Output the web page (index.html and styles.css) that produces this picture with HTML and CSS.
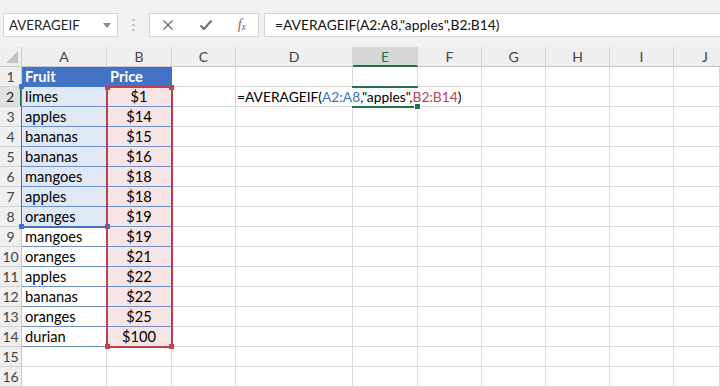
FILE: index.html
```html
<!DOCTYPE html>
<html>
<head>
<meta charset="utf-8">
<link rel="stylesheet" href="styles.css">
</head>
<body>
<div class="app">
  <div class="fbar">
    <div class="namebox">
      <span class="nb-text">AVERAGEIF</span>
      <svg class="nb-arrow" width="8" height="5" viewBox="0 0 8 5"><path d="M0 0H8L4 5Z" fill="#8a8a8a"/></svg>
    </div>
    <div class="grip">
      <svg width="3" height="12" viewBox="0 0 3 12"><rect x="0.5" y="0" width="2" height="2" fill="#b4b4b4"/><rect x="0.5" y="5" width="2" height="2" fill="#b4b4b4"/><rect x="0.5" y="10" width="2" height="2" fill="#b4b4b4"/></svg>
    </div>
    <div class="fbtns">
      <svg class="ic" width="12" height="12" viewBox="0 0 12 12"><path d="M1.5 1.5L10.5 10.5M10.5 1.5L1.5 10.5" stroke="#6e6e6e" stroke-width="1.4" fill="none"/></svg>
      <svg class="ic" width="14" height="12" viewBox="0 0 14 12"><path d="M1.5 6.5L5 10L12.5 1.5" stroke="#6e6e6e" stroke-width="2" fill="none"/></svg>
      <span class="fx">f<sub>x</sub></span>
    </div>
    <div class="finput">=AVERAGEIF(A2:A8,"apples",B2:B14)</div>
  </div>
  <div class="sheet">
    <div class="grid">
      <div class="corner"><span class="tri"></span></div>
      <div class="ch">A</div><div class="ch">B</div><div class="ch">C</div><div class="ch">D</div><div class="ch sel">E</div><div class="ch">F</div><div class="ch">G</div><div class="ch">H</div><div class="ch">I</div><div class="ch last">J</div>

      <div class="rh">1</div><div class="c thead">Fruit</div><div class="c thead">Price</div><div class="c"></div><div class="c"></div><div class="c"></div><div class="c"></div><div class="c"></div><div class="c"></div><div class="c"></div><div class="c"></div>

      <div class="rh rsel">2</div><div class="c ta ra">limes</div><div class="c tb">$1</div><div class="c"></div><div class="c nor ed"><span class="edit">=AVERAGEIF(<span class="ref-a">A2:A8</span>,"apples",<span class="ref-b">B2:B14</span>)</span></div><div class="c nor"></div><div class="c"></div><div class="c"></div><div class="c"></div><div class="c"></div><div class="c"></div>

      <div class="rh">3</div><div class="c ta ra">apples</div><div class="c tb">$14</div><div class="c"></div><div class="c"></div><div class="c"></div><div class="c"></div><div class="c"></div><div class="c"></div><div class="c"></div><div class="c"></div>
      <div class="rh">4</div><div class="c ta ra">bananas</div><div class="c tb">$15</div><div class="c"></div><div class="c"></div><div class="c"></div><div class="c"></div><div class="c"></div><div class="c"></div><div class="c"></div><div class="c"></div>
      <div class="rh">5</div><div class="c ta ra">bananas</div><div class="c tb">$16</div><div class="c"></div><div class="c"></div><div class="c"></div><div class="c"></div><div class="c"></div><div class="c"></div><div class="c"></div><div class="c"></div>
      <div class="rh">6</div><div class="c ta ra">mangoes</div><div class="c tb">$18</div><div class="c"></div><div class="c"></div><div class="c"></div><div class="c"></div><div class="c"></div><div class="c"></div><div class="c"></div><div class="c"></div>
      <div class="rh">7</div><div class="c ta ra">apples</div><div class="c tb">$18</div><div class="c"></div><div class="c"></div><div class="c"></div><div class="c"></div><div class="c"></div><div class="c"></div><div class="c"></div><div class="c"></div>
      <div class="rh">8</div><div class="c ta ra">oranges</div><div class="c tb">$19</div><div class="c"></div><div class="c"></div><div class="c"></div><div class="c"></div><div class="c"></div><div class="c"></div><div class="c"></div><div class="c"></div>
      <div class="rh">9</div><div class="c ta">mangoes</div><div class="c tb">$19</div><div class="c"></div><div class="c"></div><div class="c"></div><div class="c"></div><div class="c"></div><div class="c"></div><div class="c"></div><div class="c"></div>
      <div class="rh">10</div><div class="c ta">oranges</div><div class="c tb">$21</div><div class="c"></div><div class="c"></div><div class="c"></div><div class="c"></div><div class="c"></div><div class="c"></div><div class="c"></div><div class="c"></div>
      <div class="rh">11</div><div class="c ta">apples</div><div class="c tb">$22</div><div class="c"></div><div class="c"></div><div class="c"></div><div class="c"></div><div class="c"></div><div class="c"></div><div class="c"></div><div class="c"></div>
      <div class="rh">12</div><div class="c ta">bananas</div><div class="c tb">$22</div><div class="c"></div><div class="c"></div><div class="c"></div><div class="c"></div><div class="c"></div><div class="c"></div><div class="c"></div><div class="c"></div>
      <div class="rh">13</div><div class="c ta">oranges</div><div class="c tb">$25</div><div class="c"></div><div class="c"></div><div class="c"></div><div class="c"></div><div class="c"></div><div class="c"></div><div class="c"></div><div class="c"></div>
      <div class="rh">14</div><div class="c ta">durian</div><div class="c tb">$100</div><div class="c"></div><div class="c"></div><div class="c"></div><div class="c"></div><div class="c"></div><div class="c"></div><div class="c"></div><div class="c"></div>
      <div class="rh">15</div><div class="c"></div><div class="c"></div><div class="c"></div><div class="c"></div><div class="c"></div><div class="c"></div><div class="c"></div><div class="c"></div><div class="c"></div><div class="c"></div>
      <div class="rh">16</div><div class="c"></div><div class="c"></div><div class="c"></div><div class="c"></div><div class="c"></div><div class="c"></div><div class="c"></div><div class="c"></div><div class="c"></div><div class="c"></div>
    </div>

    <div class="range range-a"><i class="h tl"></i><i class="h bl"></i><i class="h br"></i></div>
    <div class="range range-b"><i class="h tl"></i><i class="h tr"></i><i class="h bl"></i><i class="h br"></i></div>
    <div class="active"><i class="fill"></i></div>
  </div>
</div>
</body>
</html>
```

FILE: styles.css
```css
* { box-sizing: border-box; }
html, body { margin: 0; padding: 0; background: #fff; }
body { font-family: Lato, "Open Sans", sans-serif; color: #000; }
.app { width: 720px; height: 387px; overflow: hidden; }

.fbar {
  height: 47px;
  background: #f1f1f1;
  display: flex;
  align-items: flex-start;
  padding-top: 13px;
  padding-left: 3px;
}
.namebox {
  width: 115px; height: 24px;
  background: #fff;
  border: 1px solid #d4d4d4;
  display: flex; align-items: center; justify-content: space-between;
  padding: 0 6px 0 5px;
  font-size: 13.3px; color: #222;
}
.nb-arrow { margin-top: 1px; }
.grip { width: 31px; height: 24px; display: flex; align-items: center; justify-content: center; }
.fbtns {
  width: 110px; height: 24px;
  background: #fff; border: 1px solid #d4d4d4;
  display: flex; align-items: center; justify-content: space-between;
  padding: 0 12px 0 12px;
}
.fx { font-family: "Liberation Serif", serif; font-style: italic; color: #6e6e6e; font-size: 14px; line-height: 1; }
.fx sub { font-size: 10px; vertical-align: -1px; }
.finput {
  flex: 1; height: 24px; margin-left: 5px;
  background: #fff; border: 1px solid #d4d4d4; border-right: none;
  font-size: 13.8px; line-height: 22px; padding-left: 10px; color: #111;
  white-space: nowrap;
}

.sheet { position: relative; height: 340px; overflow: hidden; }
.grid {
  display: grid;
  grid-template-columns: 22px 85px 65px 64px 117px 65px 64px 64px 64px 64px 46px;
  grid-auto-rows: 20px;
  width: 720px;
}
.corner { background: #efefef; border-right: 1px solid #c8c8c8; border-bottom: 1px solid #c8c8c8; position: relative; }
.tri {
  position: absolute; right: 3px; bottom: 3px;
  width: 0; height: 0;
  border-left: 12px solid transparent;
  border-bottom: 12px solid #c2c2c2;
}
.ch {
  background: #efefef;
  border-right: 1px solid #d2d2d2;
  border-bottom: 1px solid #c8c8c8;
  text-align: center; font-size: 14px; line-height: 20px; color: #444;
}
.ch.last { text-align: left; padding-left: 28px; border-right: none; }
.ch.sel { background: #d6d6d6; color: #217346; border-bottom: 2px solid #217346; }
.rh {
  background: #efefef;
  border-right: 1px solid #c8c8c8;
  border-bottom: 1px solid #d2d2d2;
  text-align: center; font-size: 14px; line-height: 20px; color: #444;
}
.rh.rsel { background: #e1e1e1; border-right: 2px solid #217346; color: #222; }
.c {
  border-right: 1px solid #d9d9d9;
  border-bottom: 1px solid #d9d9d9;
  font-size: 14.67px; line-height: 20px; padding: 0 3px;
  white-space: nowrap;
}
.c.nor { border-right-color: transparent; }
.c.ed { padding-left: 1px; font-size: 13.8px; }
.thead { background: #4472c4; color: #fff; font-weight: bold; border-color: #4472c4; }
.ta { border-bottom: 1px solid #6f8fca; border-right-color: transparent; }
.ta.ra { background: #dfe8f5; }
.tb { background: #f7e4e5; border-bottom: 1px solid #6f8fca; text-align: center; }
.edit { position: relative; z-index: 2; }
.ref-a { color: #4472c4; }
.ref-b { color: #b8434f; }

.range { position: absolute; pointer-events: none; }
.range-a { left: 21px; top: 39px; width: 87px; height: 142px; border: 1px solid #4472c4; border-bottom-width: 2px; }
.range-b { left: 106px; top: 39px; width: 67px; height: 262px; border: 2px solid #b8434f; }
.h { position: absolute; width: 5px; height: 5px; }
.range-a .h { background: #4472c4; }
.range-b .h { background: #c4424f; }
.h.tl { left: -3px; top: -3px; }
.h.tr { right: -3px; top: -3px; }
.h.bl { left: -3px; bottom: -3px; }
.h.br { right: -3px; bottom: -3px; }
.active { position: absolute; left: 352px; top: 39px; width: 66px; height: 22px; border-top: 2px solid #217346; border-bottom: 2px solid #217346; }
.fill { position: absolute; right: -3px; bottom: -4px; width: 5px; height: 5px; background: #217346; border: 1px solid #fff; box-sizing: content-box; }
```
